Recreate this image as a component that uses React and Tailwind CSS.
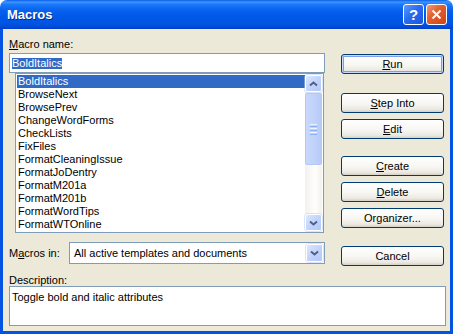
import React from 'react';

const macros = [
    'BoldItalics',
    'BrowseNext',
    'BrowsePrev',
    'ChangeWordForms',
    'CheckLists',
    'FixFiles',
    'FormatCleaningIssue',
    'FormatJoDentry',
    'FormatM201a',
    'FormatM201b',
    'FormatWordTips',
    'FormatWTOnline',
];

const XpButton = ({ children, isDefault, className = '' }) => (
    <button
        className={`flex h-[20px] w-[103px] items-center justify-center rounded-[3px] border border-[#003c74] bg-[linear-gradient(to_bottom,#ffffff_0%,#f7f6f2_55%,#ebe9e1_85%,#d6d0c5_100%)] text-[11px] leading-[13px] text-black ${isDefault ? 'shadow-[inset_0_0_0_1px_#c6dbfc,inset_0_0_0_2px_#7d9ef0]' : ''} ${className}`}
    >
        {children}
    </button>
);

const Chevron = ({ down }) => (
    <svg width="9" height="6" viewBox="0 0 9 6">
        <path
            d={down ? 'M1 1.5 L4.5 4.5 L8 1.5' : 'M1 4.5 L4.5 1.5 L8 4.5'}
            fill="none"
            stroke="#4d6185"
            strokeWidth="2"
        />
    </svg>
);

const ScrollBtn = ({ down, className = '' }) => (
    <div className={`flex h-[17px] w-[17px] items-center justify-center rounded-[2px] border border-[#ffffff] bg-[linear-gradient(135deg,#dde8fe_0%,#c2d3fc_50%,#b4c8f6_100%)] shadow-[0_0_0_0.5px_#b8cbf3] ${className}`}>
        <Chevron down={down} />
    </div>
);

const App = () => {
    return (
        <div className="flex h-[334px] w-[453px] flex-col font-['Liberation_Sans',Arial,sans-serif] text-[11px] text-black">
            {/* title bar */}
            <div className="flex h-[29px] items-center rounded-t-[7px] bg-[linear-gradient(to_bottom,#0a5fe8_0%,#3d95ff_7%,#1a77f8_16%,#0862ee_35%,#0058e6_60%,#0055e3_80%,#0049d6_94%,#003ec9_100%)] pl-[7px] pr-[6px]">
                <span className="flex-1 text-[13px] font-bold leading-[16px] text-white [text-shadow:1px_1px_#0a2a8a]">Macros</span>
                <div className="flex gap-[2px]">
                    <div className="flex h-[21px] w-[21px] items-center justify-center rounded-[3px] border border-white bg-[linear-gradient(135deg,#5b9bff_0%,#2a6cf0_45%,#1b55dd_100%)] text-[15px] font-bold leading-none text-white">
                        ?
                    </div>
                    <div className="flex h-[21px] w-[21px] items-center justify-center rounded-[3px] border border-white bg-[linear-gradient(135deg,#f19a7c_0%,#e4602f_40%,#cc4418_100%)]">
                        <svg width="11" height="11" viewBox="0 0 11 11">
                            <path d="M1.5 1.5 L9.5 9.5 M9.5 1.5 L1.5 9.5" stroke="#ffffff" strokeWidth="2" />
                        </svg>
                    </div>
                </div>
            </div>

            {/* body */}
            <div className="flex flex-1 flex-col border-x-[3px] border-b-[3px] border-[#0553e3] bg-[#ece9d8]">
                <div className="flex">
                    {/* left column */}
                    <div className="ml-[6px] w-[316px] pt-[9px]">
                        <div className="h-[13px] leading-[13px]">
                            <span className="underline">M</span>acro name:
                        </div>
                        <div className="mt-[2px] flex h-[20px] items-center border border-[#7f9db9] bg-white pl-[2px]">
                            <span className="bg-[#316ac5] leading-[11px] text-white">BoldItalics</span>
                        </div>
                        <div className="ml-[6px] flex h-[160px] w-[309px] border border-[#7f9db9] bg-white p-[1px]">
                            <div className="flex-1">
                                {macros.map((m, i) => (
                                    <div
                                        key={m}
                                        className={`h-[13px] pl-[1px] leading-[13px] ${i === 0 ? 'bg-[#316ac5] text-white' : ''}`}
                                    >
                                        {m}
                                    </div>
                                ))}
                            </div>
                            <div className="flex w-[17px] flex-col bg-[linear-gradient(to_right,#f3f1ec_0%,#fefefb_60%,#f3f1ec_100%)]">
                                <ScrollBtn />
                                <div className="mt-[1px] flex h-[72px] flex-col items-center justify-center gap-[1px] rounded-[2px] border border-[#b4c8f6] bg-[linear-gradient(to_right,#c9d8fc_0%,#c1d3fb_50%,#b6cbf7_100%)]">
                                    <div className="h-[1px] w-[7px] bg-[#eef4fe]" />
                                    <div className="h-[1px] w-[7px] bg-[#8cb0f8]" />
                                    <div className="h-[1px] w-[7px] bg-[#eef4fe]" />
                                    <div className="h-[1px] w-[7px] bg-[#8cb0f8]" />
                                    <div className="h-[1px] w-[7px] bg-[#eef4fe]" />
                                    <div className="h-[1px] w-[7px] bg-[#8cb0f8]" />
                                </div>
                                <div className="flex-1" />
                                <ScrollBtn down />
                            </div>
                        </div>
                        <div className="mt-[9px] flex items-center">
                            <div className="w-[60px] leading-[13px]">
                                M<span className="underline">a</span>cros in:
                            </div>
                            <div className="flex h-[22px] flex-1 items-center border border-[#7f9db9] bg-white p-[1px]">
                                <span className="flex-1 pl-[3px] leading-[13px]">All active templates and documents</span>
                                <ScrollBtn down className="h-[18px] w-[16px]" />
                            </div>
                        </div>
                    </div>

                    {/* right column buttons */}
                    <div className="ml-[16px] flex w-[103px] flex-col pt-[25px]">
                        <XpButton isDefault>
                            <span><span className="underline">R</span>un</span>
                        </XpButton>
                        <XpButton className="mt-[19px]">
                            <span><span className="underline">S</span>tep Into</span>
                        </XpButton>
                        <XpButton className="mt-[6px]">
                            <span><span className="underline">E</span>dit</span>
                        </XpButton>
                        <XpButton className="mt-[17px]">
                            <span><span className="underline">C</span>reate</span>
                        </XpButton>
                        <XpButton className="mt-[6px]">
                            <span><span className="underline">D</span>elete</span>
                        </XpButton>
                        <XpButton className="mt-[6px]">
                            <span>Or<span className="underline">g</span>anizer...</span>
                        </XpButton>
                        <XpButton className="mt-[18px]">Cancel</XpButton>
                    </div>
                </div>

                <div className="ml-[6px] w-[437px]">
                    <div className="mt-[8px] h-[12px] leading-[12px]">Description:</div>
                    <div className="h-[40px] border border-[#7f9db9] bg-white pl-[2px] pt-[4px] leading-[13px]">
                        Toggle bold and italic attributes
                    </div>
                </div>
            </div>
        </div>
    );
};

export default App;
